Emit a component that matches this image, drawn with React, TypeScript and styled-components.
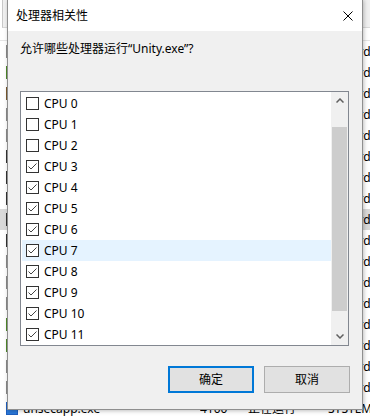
import styled, { createGlobalStyle } from 'styled-components';

const GlobalStyle = createGlobalStyle`
  html, body { margin: 0; padding: 0; }
  body {
    width: 370px;
    height: 417px;
    overflow: hidden;
    background: #fff;
    font-family: "Noto Sans", "Noto Sans CJK SC", sans-serif;
    font-size: 12px;
    color: #000;
  }
`;

const Screen = styled.div`
  position: relative;
  width: 370px;
  height: 417px;
  overflow: hidden;
  background: #fff;
`;

/* ---- task manager behind the dialog ---- */
const TabBar = styled.div`
  height: 28px;
  box-sizing: border-box;
  background: #f0f0f0;
  border-bottom: 1px solid #d9d9d9;
  border-left: 1px solid #c8c8c8;
  margin-left: 2px;
`;

const ColHeader = styled.div`
  height: 13px;
  box-sizing: border-box;
  border-bottom: 1px solid #e5e5e5;
`;

const ProcRow = styled.div<{ $selected?: boolean }>`
  height: 21px;
  display: grid;
  grid-template-columns: 23px 177px 48px 80px auto;
  align-items: center;
  background: ${(p) => (p.$selected ? '#d9d9d9' : 'transparent')};
  white-space: nowrap;
  line-height: 21px;
`;

const ProcIcon = styled.span<{ $kind: string }>`
  display: block;
  width: 12px;
  height: 13px;
  margin-left: 6px;
  box-sizing: border-box;
  border: 1px solid
    ${(p) =>
      p.$kind === 'green' ? '#4f8a2b' : p.$kind === 'brown' ? '#7a5a30' : p.$kind === 'blue' ? '#1f5fbf' : p.$kind === 'dark' ? '#333' : '#8a8a8a'};
  background: ${(p) =>
    p.$kind === 'green' ? '#6aa83a' : p.$kind === 'brown' ? '#b08850' : p.$kind === 'blue' ? '#2a78d8' : '#fff'};
`;

const Cell = styled.span`
  overflow: hidden;
`;

/* ---- dialog ---- */
const Dialog = styled.div`
  position: absolute;
  left: 7px;
  top: -1px;
  width: 356px;
  height: 411px;
  box-sizing: border-box;
  border: 1px solid #8f8f8f;
  background: #f0f0f0;
  display: flex;
  flex-direction: column;
  box-shadow: 1px 1px 4px rgba(0, 0, 0, 0.25);
`;

const TitleBar = styled.div`
  height: 31px;
  flex: none;
  background: #fff;
  display: flex;
  align-items: center;
  justify-content: space-between;
  padding-left: 8px;
`;

const Title = styled.span`
  line-height: 16px;
`;

const CloseIcon = styled.svg`
  width: 10px;
  height: 10px;
  margin-right: 9px;
`;

const Body = styled.div`
  padding: 10px 12px 0;
  display: flex;
  flex-direction: column;
`;

const Prompt = styled.div`
  line-height: 16px;
  height: 16px;
`;

const ListBox = styled.div`
  margin-top: 34px;
  width: 329px;
  height: 255px;
  box-sizing: border-box;
  border: 1px solid #828790;
  background: #fff;
  display: flex;
`;

const Items = styled.div`
  flex: 1;
  padding: 1px 0 0 1px;
  overflow: hidden;
`;

const Item = styled.div<{ $hover?: boolean }>`
  height: 21px;
  display: flex;
  align-items: center;
  padding-left: 4px;
  gap: 5px;
  background: ${(p) => (p.$hover ? '#e5f3ff' : 'transparent')};
`;

const Box = styled.span`
  width: 13px;
  height: 13px;
  box-sizing: border-box;
  border: 1px solid #333;
  background: #fff;
  display: flex;
`;

const ItemLabel = styled.span`
  line-height: 16px;
`;

const ScrollBar = styled.div`
  width: 17px;
  flex: none;
  background: #f0f0f0;
  display: flex;
  flex-direction: column;
`;

const ArrowBtn = styled.div`
  height: 17px;
  flex: none;
  display: flex;
  align-items: center;
  justify-content: center;
`;

const Track = styled.div`
  flex: 1;
`;

const Thumb = styled.div`
  margin: 18px 1px 0;
  height: 184px;
  background: #cdcdcd;
`;

const ButtonRow = styled.div`
  margin-top: 20px;
  display: flex;
  justify-content: flex-end;
  gap: 10px;
`;

const Button = styled.button<{ $primary?: boolean }>`
  width: 86px;
  height: 27px;
  box-sizing: border-box;
  margin: 0;
  padding: 0;
  background: #e1e1e1;
  border: ${(p) => (p.$primary ? '2px solid #0078d7' : '1px solid #adadad')};
  font-family: "Noto Sans", "Noto Sans CJK SC", sans-serif;
  font-size: 12px;
  color: #000;
  line-height: 16px;
`;

// rows of the process list; only the edges show around the dialog
const procs = [
  { icon: 'gray', user: 'Richard' },
  { icon: 'green', user: 'Richard' },
  { icon: 'brown', user: 'Richard' },
  { icon: 'gray', user: 'Richard' },
  { icon: 'gray', user: 'Richard' },
  { icon: 'dark', user: 'Richard' },
  { icon: 'dark', user: 'Richard' },
  { icon: 'dark', user: 'Richard' },
  { icon: 'dark', user: 'Richard' },
  { icon: 'dark', user: 'Richard' },
  { icon: 'gray', user: 'Richard' },
  { icon: 'gray', user: 'Richard' },
  { icon: 'gray', user: 'Richard' },
  { icon: 'green', user: 'Richard' },
  { icon: 'green', user: 'Richard' },
  { icon: 'gray', user: 'Richard' },
  { icon: 'gray', user: 'Richard' },
  { icon: 'blue', name: 'unsecapp.exe', pid: '4100', status: '正在运行', user: 'SYSTEM' },
];

const cpus = Array.from({ length: 12 }, (_, i) => i);

function Check() {
  return (
    <svg width="11" height="11" viewBox="0 0 11 11">
      <polyline points="1.5,5.5 4,8 9.5,2.5" fill="none" stroke="#444" strokeWidth="1" />
    </svg>
  );
}

export default function App() {
  return (
    <Screen>
      <GlobalStyle />
      <TabBar />
      <ColHeader />
      {procs.map((p, i) => (
        <ProcRow key={i} $selected={i === 8}>
          <ProcIcon $kind={p.icon} />
          <Cell>{p.name}</Cell>
          <Cell>{p.pid}</Cell>
          <Cell>{p.status}</Cell>
          <Cell>{p.user}</Cell>
        </ProcRow>
      ))}

      <Dialog>
        <TitleBar>
          <Title>处理器相关性</Title>
          <CloseIcon viewBox="0 0 10 10">
            <path d="M0.5 0.5 L9.5 9.5 M9.5 0.5 L0.5 9.5" stroke="#000" strokeWidth="1" />
          </CloseIcon>
        </TitleBar>
        <Body>
          <Prompt>允许哪些处理器运行“Unity.exe”?</Prompt>
          <ListBox>
            <Items>
              {cpus.map((n) => (
                <Item key={n} $hover={n === 7}>
                  <Box>{n >= 3 && <Check />}</Box>
                  <ItemLabel>CPU {n}</ItemLabel>
                </Item>
              ))}
            </Items>
            <ScrollBar>
              <ArrowBtn>
                <svg width="8" height="5" viewBox="0 0 8 5">
                  <polyline points="0.5,4.5 4,1 7.5,4.5" fill="none" stroke="#606060" strokeWidth="1.5" />
                </svg>
              </ArrowBtn>
              <Track>
                <Thumb />
              </Track>
              <ArrowBtn>
                <svg width="8" height="5" viewBox="0 0 8 5">
                  <polyline points="0.5,0.5 4,4 7.5,0.5" fill="none" stroke="#606060" strokeWidth="1.5" />
                </svg>
              </ArrowBtn>
            </ScrollBar>
          </ListBox>
          <ButtonRow>
            <Button $primary>确定</Button>
            <Button>取消</Button>
          </ButtonRow>
        </Body>
      </Dialog>
    </Screen>
  );
}
